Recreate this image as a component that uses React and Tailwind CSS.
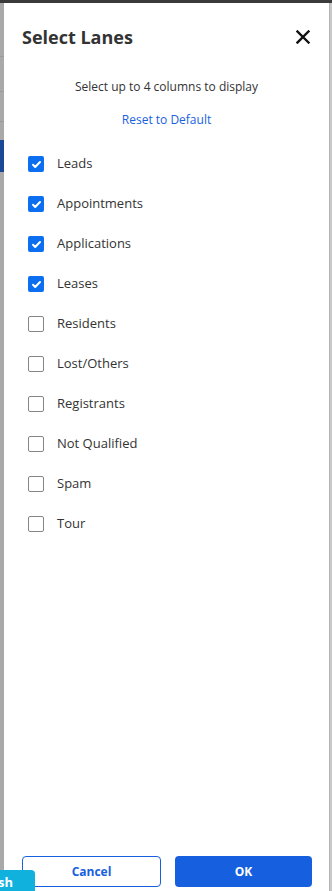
const LANES = [
  { name: 'Leads', checked: true },
  { name: 'Appointments', checked: true },
  { name: 'Applications', checked: true },
  { name: 'Leases', checked: true },
  { name: 'Residents', checked: false },
  { name: 'Lost/Others', checked: false },
  { name: 'Registrants', checked: false },
  { name: 'Not Qualified', checked: false },
  { name: 'Spam', checked: false },
  { name: 'Tour', checked: false },
]

function Box({ checked }) {
  if (checked) {
    return (
      <span className="w-4 h-4 rounded-[2px] bg-[#0b6ff0] flex items-center justify-center shrink-0">
        <svg width="11" height="11" viewBox="0 0 12 12" fill="none" stroke="white" strokeWidth="2.2" strokeLinecap="round" strokeLinejoin="round">
          <path d="M2.2 6.3l2.4 2.4 5.2-5.4" />
        </svg>
      </span>
    )
  }
  return <span className="w-4 h-4 rounded-[2px] border border-[#858585] bg-white shrink-0" />
}

export default function App() {
  return (
    <div className="w-[332px] h-[891px] relative overflow-hidden bg-[#a9a9a9] flex flex-col" style={{ fontFamily: '"Open Sans", "Noto Sans", sans-serif' }}>
      <div className="h-[3px] bg-[#3a3a3a] shrink-0" />
      <div className="flex flex-1 min-h-0">
        {/* left strip of page behind */}
        <div className="w-[4px] flex flex-col shrink-0">
          <div className="h-[54px] border-b border-[#9a9a9a]" />
          <div className="h-[35px] border-b border-[#9a9a9a]" />
          <div className="h-[30px] border-b border-[#9a9a9a]" />
          <div className="h-[18px]" />
          <div className="h-[32px] bg-[#1b4797]" />
        </div>

        {/* dialog */}
        <div className="flex-1 bg-white flex flex-col">
          <div className="flex items-center justify-between pl-[18px] pr-[19px] pt-[22px]">
            <h2 className="text-[18px] font-bold text-[#333] leading-[24px]">Select Lanes</h2>
            <svg width="14" height="14" viewBox="0 0 14 14" stroke="#111" strokeWidth="2.4" strokeLinecap="square">
              <path d="M1.5 1.5l11 11M12.5 1.5l-11 11" />
            </svg>
          </div>
          <p className="text-center text-[12px] font-medium text-[#333] mt-[30px] leading-[16px]">Select up to 4 columns to display</p>
          <p className="text-center text-[12px] text-[#1a5fe0] mt-[17px] leading-[16px]">Reset to Default</p>

          <ul className="flex flex-col mt-[16px] pl-[24px]">
            {LANES.map((l) => (
              <li key={l.name} className="h-[40px] flex items-center gap-[13px]">
                <Box checked={l.checked} />
                <span className="text-[13px] text-[#333]">{l.name}</span>
              </li>
            ))}
          </ul>

          <div className="flex-1" />
          <div className="flex gap-[14px] pl-[18px] pr-[17px] pb-[4px]">
            <button className="flex-1 h-[31px] rounded-[4px] border border-[#1660e0] text-[#1660e0] text-[12px] font-bold bg-white">Cancel</button>
            <button className="flex-1 h-[31px] rounded-[4px] bg-[#1660e0] text-white text-[12px] font-bold">OK</button>
          </div>
        </div>

        {/* right strip */}
        <div className="w-[3px] bg-[#c9c9c9] border-l border-[#b5b5b5] shrink-0" />
      </div>

      <div className="absolute left-0 bottom-0 w-[35px] h-[21px] bg-[#10b1dd] rounded-tr-[4px] flex items-end overflow-hidden">
        <span className="text-white font-bold text-[13px] leading-[18px] -ml-[2px]">sh</span>
      </div>
    </div>
  )
}
